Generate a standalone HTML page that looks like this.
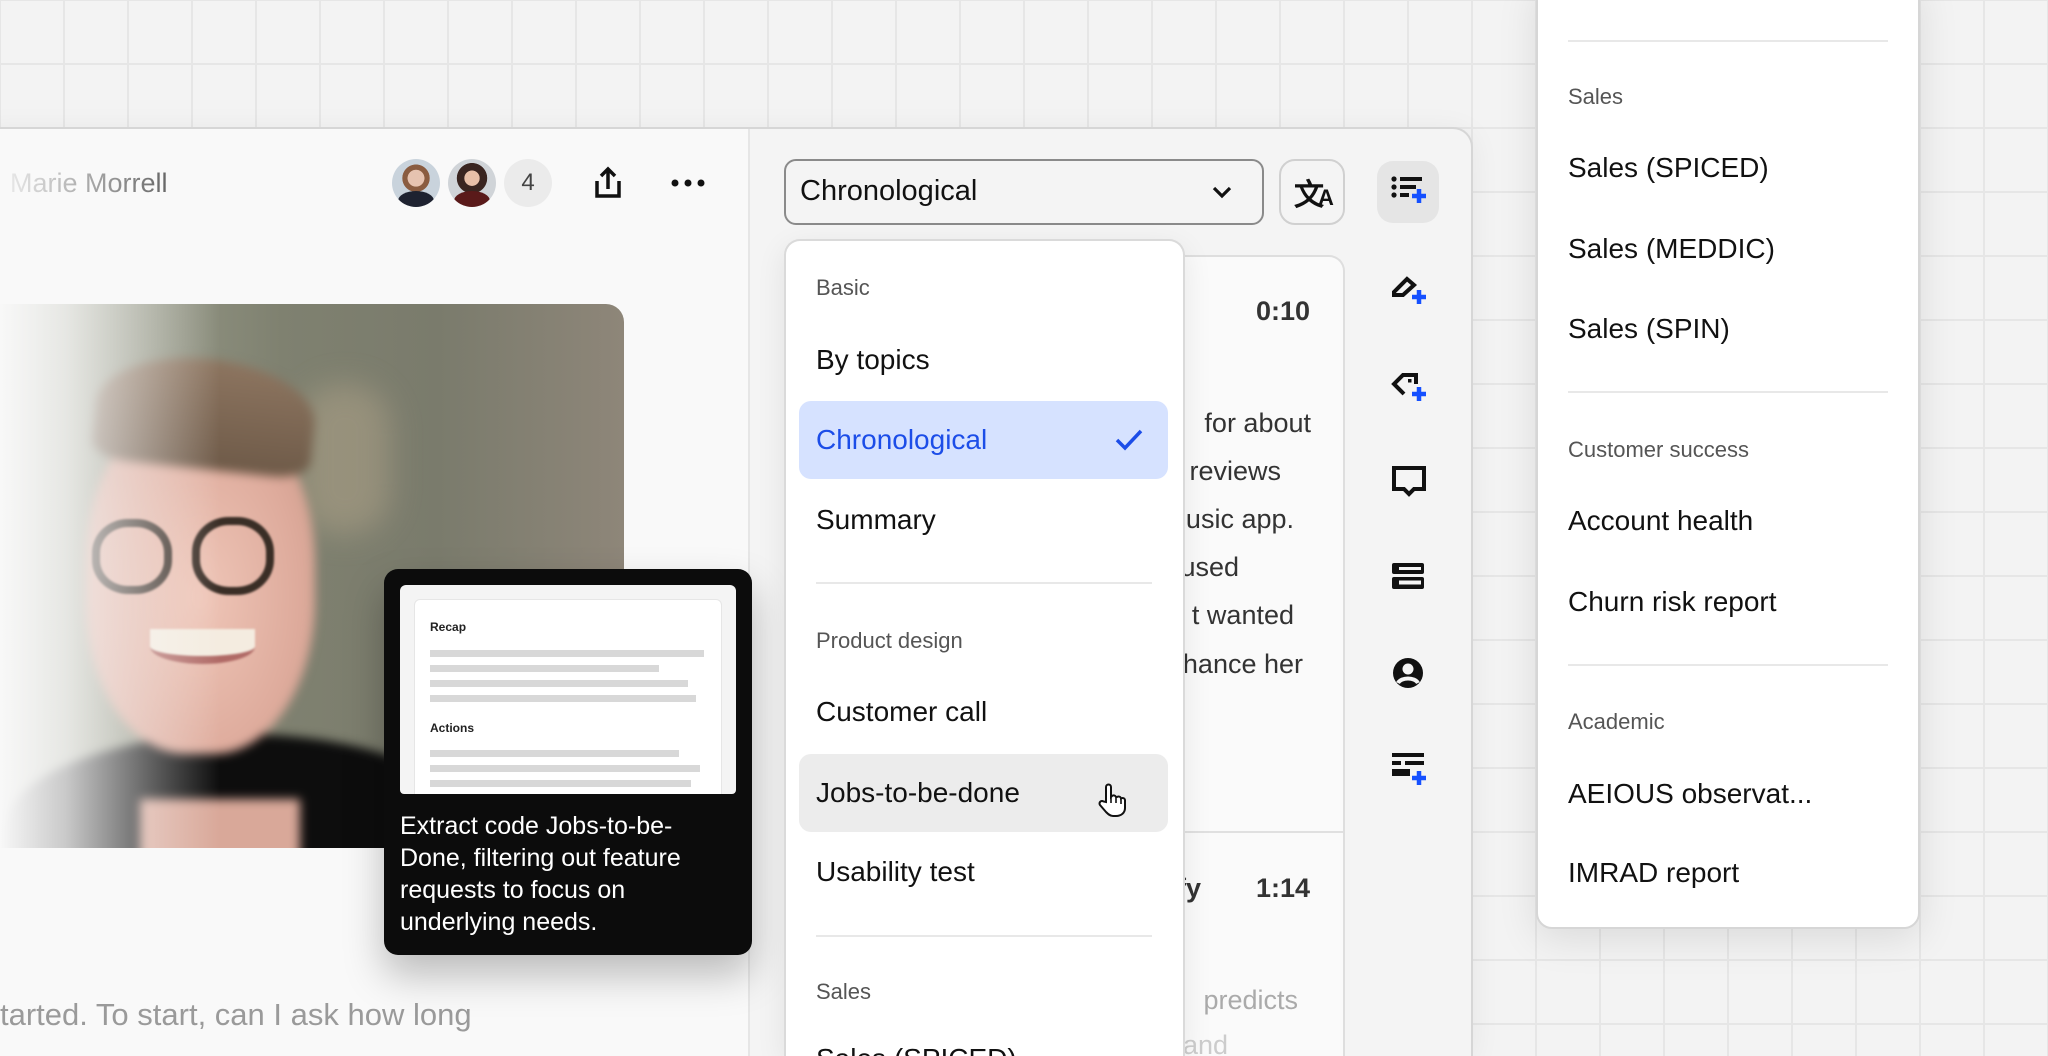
<!DOCTYPE html>
<html><head><meta charset="utf-8"><style>
*{margin:0;padding:0;box-sizing:border-box}
html,body{width:2048px;height:1056px;overflow:hidden}
body{font-family:"Liberation Sans",sans-serif;background:#f3f3f3}
#w{position:relative;width:2048px;height:1056px;overflow:hidden;background:#f3f3f3;
background-image:linear-gradient(#e6e6e6 2px,transparent 2px),linear-gradient(90deg,#e6e6e6 2px,transparent 2px);background-size:64px 64px;background-position:0 -1px,-1px 0}
.a{position:absolute}
.t{position:absolute;white-space:nowrap}
</style></head><body><div id="w">
<!-- main panel -->
<div class="a" style="left:-20px;top:127px;width:1493px;height:929px;background:#f4f4f4;border:2px solid #d6d6d6;border-bottom:none;border-radius:0 20px 0 0;box-shadow:0 4px 30px rgba(0,0,0,.06)"></div>
<div class="a" style="left:0;top:129px;width:750px;height:927px;background:#f9f9f9;border-right:2px solid #e6e6e6"></div>
<div class="t" style="left:0;top:168px;font-size:27px;background:linear-gradient(90deg,#eee,#bbb 40%,#666);-webkit-background-clip:text;color:transparent;padding-left:10px">Marie Morrell</div>
<!-- avatars -->
<div class="a" style="left:392px;top:159px;width:48px;height:48px;border-radius:50%;background:radial-gradient(circle at 50% 40%,#e6c3b0 0 22%,#8a5c40 23% 36%,#c9d3dc 37%);overflow:hidden"><div class="a" style="left:6px;top:32px;width:36px;height:20px;border-radius:50%;background:#1e2230"></div></div>
<div class="a" style="left:448px;top:159px;width:48px;height:48px;border-radius:50%;background:radial-gradient(circle at 50% 40%,#e8c0a8 0 20%,#3a2520 21% 40%,#d0d4d8 41%);overflow:hidden"><div class="a" style="left:6px;top:32px;width:36px;height:20px;border-radius:50%;background:#5a1a1a"></div></div>
<div class="a" style="left:504px;top:159px;width:48px;height:48px;border-radius:50%;background:#ebebeb;font-size:24px;color:#444;text-align:center;line-height:48px">4</div>
<svg class="a" style="left:590px;top:165px" width="36" height="36" viewBox="0 0 36 36" fill="none" stroke="#111" stroke-width="3.5"><path d="M18 24V4M11 11l7-7 7 7M7 16v15h22V16"/></svg>
<svg class="a" style="left:670px;top:174px" width="36" height="18"><circle cx="5" cy="9" r="3.5" fill="#111"/><circle cx="18" cy="9" r="3.5" fill="#111"/><circle cx="31" cy="9" r="3.5" fill="#111"/></svg>
<!-- video -->
<div class="a" style="left:0;top:304px;width:624px;height:544px;border-radius:0 18px 18px 0;overflow:hidden;background:linear-gradient(90deg,#a9ad9b,#7f8170 45%,#7a7b6c 70%,#8e8679)">
 <div style="position:absolute;inset:0;filter:blur(5px)">
 <div class="a" style="left:300px;top:80px;width:90px;height:150px;border-radius:40px;background:rgba(200,180,150,.35);filter:blur(14px)"></div>
 <div class="a" style="left:0;top:430px;width:480px;height:200px;border-radius:50% 50% 0 0;background:#0d0d0d"></div>
 <div class="a" style="left:140px;top:495px;width:160px;height:90px;background:#d9a899"></div>
 <div class="a" style="left:85px;top:100px;width:230px;height:350px;border-radius:46% 46% 44% 44%;background:radial-gradient(ellipse at 50% 55%,#efc6b8,#deab9c 60%,#c99585)"></div>
 <div class="a" style="left:95px;top:55px;width:220px;height:110px;border-radius:60% 60% 20% 20%;background:linear-gradient(#8d7560,#6e5a48);transform:rotate(6deg)"></div>
 </div>
 <div class="a" style="left:92px;top:215px;width:80px;height:75px;border-radius:45%;border:8px solid #3a2e26;filter:blur(1px)"></div>
 <div class="a" style="left:192px;top:213px;width:82px;height:78px;border-radius:45%;border:8px solid #3a2e26;filter:blur(1px)"></div>
 <div class="a" style="left:150px;top:325px;width:105px;height:35px;border-radius:0 0 50% 50%;background:#f4ece0;border-bottom:8px solid #b06a66;filter:blur(1px)"></div>
 <div class="a" style="left:0;top:0;width:220px;height:544px;background:linear-gradient(90deg,#f8f8f8 0,rgba(248,248,248,.8) 30%,rgba(248,248,248,0))"></div>
</div>
<div class="t" style="left:0;top:997px;font-size:31px;color:#9a9a9a">tarted. To start, can I ask how long</div>
<!-- tooltip -->
<div class="a" style="left:384px;top:569px;width:368px;height:386px;background:#0c0c0c;border-radius:14px;box-shadow:0 20px 40px rgba(0,0,0,.25)">
 <div class="a" style="left:16px;top:16px;width:336px;height:209px;background:#f4f4f4;border-radius:6px 6px 4px 4px;overflow:hidden">
  <div class="a" style="left:14px;top:14px;width:308px;height:210px;background:#fff;border:1px solid #e6e6e6;border-radius:6px">
   <div class="t" style="left:15px;top:20px;font-size:12px;font-weight:bold;color:#222">Recap</div>
   <div class="a" style="left:15px;top:50px;width:274px;height:7px;background:#d8d8d8"></div>
   <div class="a" style="left:15px;top:65px;width:229px;height:7px;background:#d8d8d8"></div>
   <div class="a" style="left:15px;top:80px;width:258px;height:7px;background:#d8d8d8"></div>
   <div class="a" style="left:15px;top:95px;width:266px;height:7px;background:#d8d8d8"></div>
   <div class="t" style="left:15px;top:121px;font-size:12px;font-weight:bold;color:#222">Actions</div>
   <div class="a" style="left:15px;top:150px;width:249px;height:7px;background:#d8d8d8"></div>
   <div class="a" style="left:15px;top:165px;width:270px;height:7px;background:#d8d8d8"></div>
   <div class="a" style="left:15px;top:180px;width:261px;height:7px;background:#d8d8d8"></div>
  </div>
 </div>
 <div class="a" style="left:16px;top:241px;width:340px;font-size:25px;line-height:32px;color:#fff">Extract code Jobs-to-be-<br>Done, filtering out feature<br>requests to focus on<br>underlying needs.</div>
</div>
<!-- select -->
<div class="a" style="left:784px;top:159px;width:480px;height:66px;border:2px solid #8a8a8a;border-radius:12px;background:#f4f4f4"></div>
<div class="t" style="left:800px;top:175px;font-size:29px;color:#111">Chronological</div>
<svg class="a" style="left:1210px;top:182px" width="24" height="20" fill="none" stroke="#111" stroke-width="3.2"><path d="M4 6l8 8 8-8"/></svg>
<div class="a" style="left:1279px;top:159px;width:66px;height:66px;border:2px solid #d0d0d0;border-radius:16px"></div>
<div class="t" style="left:1294px;top:170px;font-size:30px;font-weight:bold;color:#111">文<span style="font-size:22px;margin-left:-6px">A</span></div>
<!-- toolbar -->
<div class="a" style="left:1377px;top:161px;width:62px;height:62px;background:#e5e5e5;border-radius:16px"></div>
<svg class="a" style="left:1390px;top:174px" width="40" height="40" viewBox="0 0 40 40">
<g fill="#111"><circle cx="4" cy="5" r="2.6"/><circle cx="4" cy="13" r="2.6"/><circle cx="4" cy="21" r="2.6"/><rect x="10" y="3" width="22" height="4"/><rect x="10" y="11" width="16" height="4"/><rect x="10" y="19" width="9" height="4"/></g>
<path d="M29 15v14M22 22h14" stroke="#1550ff" stroke-width="4.5"/></svg>
<svg class="a" style="left:1390px;top:269px" width="40" height="40" viewBox="0 0 40 40"><path d="M4 23L17 10l7 6-11 10H4z" fill="none" stroke="#111" stroke-width="4"/><path d="M29 21v14M22 28h14" stroke="#1550ff" stroke-width="4.5"/></svg>
<svg class="a" style="left:1390px;top:366px" width="40" height="40" viewBox="0 0 40 40"><path d="M14 28L4 18l9-9h13v9" fill="none" stroke="#111" stroke-width="4"/><rect x="18" y="13" width="3.5" height="3.5" fill="#111"/><path d="M29 21v14M22 28h14" stroke="#1550ff" stroke-width="4.5"/></svg>
<svg class="a" style="left:1390px;top:462px" width="40" height="40" viewBox="0 0 40 40"><path d="M4 6h30v21H24l-5 5-5-5H4z" fill="none" stroke="#111" stroke-width="4"/></svg>
<svg class="a" style="left:1390px;top:558px" width="40" height="40" viewBox="0 0 40 40"><rect x="2" y="5" width="32" height="11" rx="2" fill="#111"/><rect x="2" y="19" width="32" height="12" rx="2" fill="#111"/><rect x="9" y="22.5" width="22" height="4" fill="#f4f4f4"/><rect x="9" y="9" width="22" height="3" fill="#f4f4f4"/></svg>
<svg class="a" style="left:1390px;top:655px" width="40" height="40" viewBox="0 0 40 40"><circle cx="18" cy="18" r="15" fill="#111"/><circle cx="18" cy="14" r="5.5" fill="#f4f4f4"/><path d="M8 28c3-6 17-6 20 0" stroke="#f4f4f4" stroke-width="4" fill="none"/></svg>
<svg class="a" style="left:1390px;top:750px" width="40" height="40" viewBox="0 0 40 40"><g fill="#111"><rect x="2" y="3" width="32" height="4"/><rect x="2" y="11" width="9" height="4"/><rect x="15" y="11" width="19" height="4"/><rect x="2" y="19" width="18" height="7"/></g><path d="M29 21v14M22 28h14" stroke="#1550ff" stroke-width="4.5"/></svg>
<!-- transcript card -->
<div class="a" style="left:1000px;top:255px;width:345px;height:801px;background:#fafafa;border:2px solid #dedede;border-bottom:none;border-radius:16px 16px 0 0;overflow:hidden">
 <div class="a" style="left:0;top:574px;width:345px;height:2px;background:#e0e0e0"></div>
</div>
<div class="t" style="right:738px;top:296px;font-size:27px;font-weight:bold;color:#333">0:10</div>
<div style="font-size:27px;color:#333">
<div class="t" style="right:737px;top:408px">for about</div>
<div class="t" style="right:767px;top:456px">reviews</div>
<div class="t" style="right:754px;top:504px">music app.</div>
<div class="t" style="right:809px;top:552px">focused</div>
<div class="t" style="right:754px;top:600px">t wanted</div>
<div class="t" style="right:745px;top:649px">enhance her</div>
</div>
<div class="t" style="right:847px;top:873px;font-size:27px;font-weight:bold;color:#333">Spotify</div>
<div class="t" style="right:738px;top:873px;font-size:27px;font-weight:bold;color:#333">1:14</div>
<div class="t" style="right:750px;top:985px;font-size:27px;color:#aaa">predicts</div>
<div class="t" style="right:820px;top:1030px;font-size:27px;color:#ccc">and</div>
<!-- dropdown -->
<div class="a" style="left:784px;top:239px;width:401px;height:817px;background:#fff;border:2px solid #dadada;border-bottom:none;border-radius:16px 16px 0 0;box-shadow:0 8px 30px rgba(0,0,0,.08)"></div>
<div style="font-size:28px;color:#111">
<div class="t" style="left:816px;top:275px;font-size:22px;color:#555">Basic</div>
<div class="t" style="left:816px;top:344px">By topics</div>
<div class="a" style="left:799px;top:401px;width:369px;height:78px;background:#d6e2ff;border-radius:12px"></div>
<div class="t" style="left:816px;top:424px;color:#1c4de8">Chronological</div>
<svg class="a" style="left:1114px;top:428px" width="30" height="24" fill="none" stroke="#1c4de8" stroke-width="3.5"><path d="M3 12l8 8L27 3"/></svg>
<div class="t" style="left:816px;top:504px">Summary</div>
<div class="a" style="left:816px;top:582px;width:336px;height:2px;background:#e8e8e8"></div>
<div class="t" style="left:816px;top:628px;font-size:22px;color:#555">Product design</div>
<div class="t" style="left:816px;top:696px">Customer call</div>
<div class="a" style="left:799px;top:754px;width:369px;height:78px;background:#ececec;border-radius:12px"></div>
<div class="t" style="left:816px;top:777px">Jobs-to-be-done</div>
<svg class="a" style="left:1096px;top:782px" width="32" height="36" viewBox="0 0 32 36"><path d="M10 20V5a2.5 2.5 0 015 0v10l1-1a2.5 2.5 0 014 1l1 0a2.5 2.5 0 014 1.5 2.5 2.5 0 014 1.5V26c0 5-4 8-9 8h-3c-3 0-5-2-7-4l-6-7a2.5 2.5 0 013.5-3.5z" fill="#fff" stroke="#111" stroke-width="2"/><path d="M15 15v6M20 16v5M25 17v5" stroke="#111" stroke-width="1.6"/></svg>
<div class="t" style="left:816px;top:856px">Usability test</div>
<div class="a" style="left:816px;top:935px;width:336px;height:2px;background:#e8e8e8"></div>
<div class="t" style="left:816px;top:979px;font-size:22px;color:#555">Sales</div>
<div class="t" style="left:816px;top:1043px;height:13px;overflow:hidden">Sales (SPICED)</div>
</div>
<!-- right panel -->
<div class="a" style="left:1536px;top:-20px;width:384px;height:949px;background:#fff;border:2px solid #d6d6d6;border-radius:0 0 16px 16px;box-shadow:0 10px 40px rgba(0,0,0,.1)">
<div style="font-size:28px;color:#111">
<div class="a" style="left:30px;top:58px;width:320px;height:2px;background:#e8e8e8"></div>
<div class="t" style="left:30px;top:102px;font-size:22px;color:#555">Sales</div>
<div class="t" style="left:30px;top:170px">Sales (SPICED)</div>
<div class="t" style="left:30px;top:251px">Sales (MEDDIC)</div>
<div class="t" style="left:30px;top:331px">Sales (SPIN)</div>
<div class="a" style="left:30px;top:409px;width:320px;height:2px;background:#e8e8e8"></div>
<div class="t" style="left:30px;top:455px;font-size:22px;color:#555">Customer success</div>
<div class="t" style="left:30px;top:523px">Account health</div>
<div class="t" style="left:30px;top:604px">Churn risk report</div>
<div class="a" style="left:30px;top:682px;width:320px;height:2px;background:#e8e8e8"></div>
<div class="t" style="left:30px;top:727px;font-size:22px;color:#555">Academic</div>
<div class="t" style="left:30px;top:796px">AEIOUS observat...</div>
<div class="t" style="left:30px;top:875px">IMRAD report</div>
</div></div>
</div></body></html>
